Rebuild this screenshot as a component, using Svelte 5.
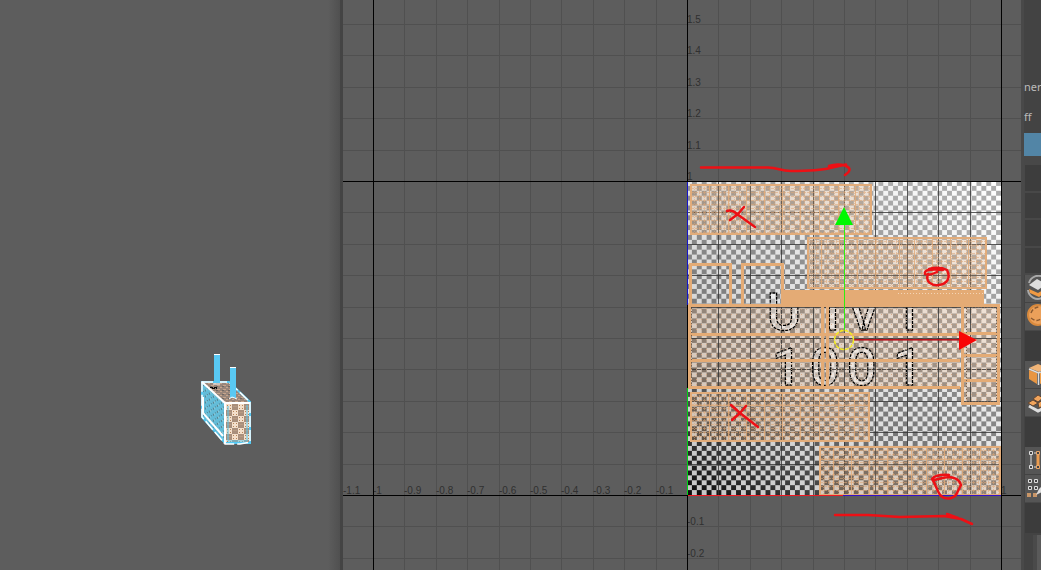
<script>
  const step = 31.4;
  const columns = Array.from({ length: 22 }, (_, i) => i - 10).map((n) => ({
    n,
    x: Math.round(687 + n * step) + 0.5
  }));
  const rows = Array.from({ length: 19 }, (_, i) => i - 3).map((n) => ({
    n,
    y: Math.round(495 - n * step) + 0.5
  }));
  const xLabels = [-11, -10, -9, -8, -7, -6, -5, -4, -3, -2, -1, 10].map((n) => ({
    text: String(n / 10),
    x: Math.round(687 + n * step) + (n === -11 ? 1 : 0)
  }));
  const yLabels = [15, 14, 13, 12, 11, 10, -1, -2].map((n) => ({
    text: String(n / 10),
    y: Math.round(495 - n * step)
  }));
  const inner = Array.from({ length: 9 }, (_, i) => Math.round((i + 1) * step));

  const shells = [
    { x: 691, y: 185, w: 180, h: 49, v: [18, 37, 55, 73, 91, 109, 128, 147, 164], hs: [] },
    { x: 808, y: 238, w: 178, h: 50, v: [13, 31, 49, 67, 91, 106, 124, 142, 160], hs: [] },
    { x: 691, y: 393, w: 178, h: 48, v: [18, 37, 55, 73, 91, 109, 128, 147, 163], hs: [12, 24] },
    { x: 820, y: 447, w: 180, h: 48, v: [13, 31, 49, 67, 91, 106, 124, 142, 160], hs: [12] }
  ];
</script>

<main>
  <section class="scene" aria-label="Perspective view">
    <svg>
      <defs>
        <pattern id="faceChecks" width="12" height="12" patternUnits="userSpaceOnUse" x="226" y="404">
          <rect width="12" height="12" fill="#f3dfcb" />
          <path d="M6 0h6v6h-6zM0 6h6v6H0z" fill="#a98f7c" />
          <path d="M1 1h1v1H1zM4 1h1v1H4zM1 4h1v1H1zM4 4h1v1H4zM7 7h1v1H7zM10 7h1v1h-1zM7 10h1v1H7zM10 10h1v1h-1z" fill="#b78458" />
          <path d="M7 2h4v1H7zM1 8h4v1H1z" fill="#b89b83" />
        </pattern>
        <pattern id="sideDots" width="4" height="6" patternUnits="userSpaceOnUse" patternTransform="skewY(38)">
          <rect width="4" height="6" fill="#63bdd9" />
          <path d="M1 1h1v2H1zM3 4h1v1H3z" fill="#567f8c" />
          <path d="M2 0h1v1H2z" fill="#a5cbd2" />
        </pattern>
        <pattern id="roofDots" width="6" height="4" patternUnits="userSpaceOnUse">
          <rect width="6" height="4" fill="#98857a" />
          <path d="M1 1h3v1H1zM4 3h2v1H4z" fill="#c7a58c" />
          <path d="M0 2h2v1H0z" fill="#6f6864" />
        </pattern>
      </defs>
      <path d="M202 382 225 403V444L202 417Z" fill="url(#sideDots)" />
      <path d="M202 382 229 381 250 402H225Z" fill="url(#roofDots)" />
      <path d="M225 403H250V443H225Z" fill="url(#faceChecks)" />
      <path d="M202 382H229L250 402V443H225L202 417Z" fill="none" stroke="#55c8f2" stroke-width="2" />
      <path d="M202 382 225 403V444M225 403H250M203 397V413L223 436" fill="none" stroke="#fff" stroke-width="2" />
      <path d="M202 382H229L250 402V442L240 444H225L202 417Z" fill="none" stroke="#fff" stroke-width="1.5" stroke-dasharray="11 3" />
      <path d="M228 406V441H247V405" fill="none" stroke="#57c5ed" />
      <path d="M210 387.500h8M212 388.500h5" stroke="#080808" stroke-dasharray="3 1" />
      <path d="M214 355h6v28h-6zM230 368h6v30h-6z" fill="#59c9f4" />
      <path d="M214 354.5h6M230 367.5h6M213 384h7M229 399l3-2 5 2" stroke="#fff" fill="none" />
    </svg>
  </section>

  <section class="editor" aria-label="UV editor">
    <svg>
      <defs>
        <linearGradient id="darkTone" gradientUnits="userSpaceOnUse" x1="687" y1="495" x2="875" y2="181">
          <stop offset="0" stop-color="#080808" />
          <stop offset=".2" stop-color="#454545" />
          <stop offset=".4" stop-color="#747474" />
          <stop offset=".65" stop-color="#8b8b8b" />
          <stop offset="1" stop-color="#acacac" />
        </linearGradient>
        <linearGradient id="lightTone" gradientUnits="userSpaceOnUse" x1="687" y1="495" x2="1001" y2="181">
          <stop offset="0" stop-color="#c6c6c6" />
          <stop offset=".5" stop-color="#e2e2e2" />
          <stop offset="1" stop-color="#fff" />
        </linearGradient>
        <pattern id="cells" width="9.8125" height="9.8125" patternUnits="userSpaceOnUse" x="687" y="181">
          <path d="M4.906 0h4.906v4.906H4.906zM0 4.906h4.906v4.906H0z" fill="#fff" />
        </pattern>
        <mask id="checks"><rect x="687" y="181" width="314" height="314" fill="url(#cells)" /></mask>
      </defs>

      <g transform="translate(-343 0)">
        <g stroke="#505050">
          {#each columns as c}<path d="M{c.x} 0V2000" />{/each}
          {#each rows as r}<path d="M343 {r.y}H3000" />{/each}
        </g>
        <g class="ticks">
          {#each xLabels as l}<text x={l.x} y="494">{l.text}</text>{/each}
          {#each yLabels as l}<text x="687" y={l.y - 1}>{l.text}</text>{/each}
        </g>

        <rect x="687" y="181" width="314" height="314" fill="url(#lightTone)" />
        <rect x="687" y="181" width="314" height="314" fill="url(#darkTone)" mask="url(#checks)" />

        <path d="M688 305H960V388H688ZM961 305H1000V404H961Z" fill="#e4ab7a" opacity=".24" />

        <g class="tile">
          <text x="767 816 847 893" y="330">U1V1</text>
          <text x="772 810 847 893" y="385">1001</text>
        </g>

        <g stroke="#333" stroke-opacity=".8">
          {#each inner as d}
            <path d="M{687.5 + d} 182V495M688 {495.5 - d}H1001" />
          {/each}
        </g>

        {#each shells as s}
          <rect x={s.x} y={s.y} width={s.w} height={s.h} fill="#e2ac7a" opacity=".24" />
          <g stroke="#dfa878" opacity=".6">
            {#each Array(Math.floor(s.h / 4)) as _, i}
              <path d="M{s.x} {s.y + 3.5 + i * 4}h{s.w}" stroke-dasharray="3 1" />
            {/each}
            {#each Array(Math.floor(s.w / 5)) as _, i}
              <path d="M{s.x + 3.5 + i * 5} {s.y}v{s.h}" stroke-dasharray="1 1" />
            {/each}
          </g>
          <rect x={s.x} y={s.y} width={s.w} height={s.h} fill="none" stroke="#e2ac7a" stroke-width="2" />
          {#each s.v as d}<path d="M{s.x + d + 0.5} {s.y}v{s.h}" stroke="#e2ac7a" opacity=".8" />{/each}
          {#each s.hs as d}<path d="M{s.x} {s.y + d + 0.5}h{s.w}" stroke="#e2ac7a" opacity=".8" />{/each}
        {/each}

        <g stroke="#d9a57b" stroke-dasharray="1 4" opacity=".8">
          {#each Array(16) as _, i}<path d="M691 {309.5 + i * 5}H960" />{/each}
          {#each Array(19) as _, i}<path d="M966 {309.5 + i * 5}H997" />{/each}
        </g>
        <g fill="none" stroke="#e4ab75" stroke-width="3">
          <path d="M690.500 306V264.500H730.500V305M742.500 305V264.500H782.500V305" />
          <path d="M688 305.500H1000M688 334.500H960M688 360.500H960M688 387.500H960M689.500 305V388M822.500 305V388M827.500 305V388" />
          <path d="M962.500 305V404M998.500 305V404M961 403.500H1000M961 333.500H1000M961 355.500H1000M961 380.500H1000" />
        </g>
        <path d="M781 290H984V304H781Z" fill="#e4ab75" />
        <path d="M898 293.500H984" stroke="#f4d4b5" stroke-dasharray="1 2" />
        <path d="M691.500 308V386M966 307.500H996M966.500 308V401M996.500 308V401M966 401.500H996" stroke="#75604e" stroke-dasharray="1 2" fill="none" />

        <g stroke="#000">
          <path d="M373.500 0V2000M687.500 0V2000M1001.500 0V2000M343 181.500H3000M343 495.500H3000" />
        </g>
        <path d="M687.500 182V305" stroke="#1414c8" />
        <path d="M687.500 388V495" stroke="#00d616" />
        <path d="M688 495.500H843" stroke="#f01823" />
        <path d="M843 495.500H1001" stroke="#3211c9" />

        <path d="M844.500 225V330" stroke="#2ff00c" />
        <path d="M844 207 853 225H835Z" fill="#00f800" />
        <path d="M854 339.500H960" stroke="#b4151e" />
        <path d="M854 340.500H960" stroke="#b4151e" opacity=".6" />
        <path d="M959 331 977 340 959 350Z" fill="#f90505" />
        <circle cx="844" cy="340" r="9.500" fill="none" stroke="#f4ec20" stroke-width="1.5" stroke-dasharray="4 1" />

        <g class="marker">
          <path d="M701 167.500H768C779 168 780 171 791 171C805 171 819 171 830 168L846 164.500M829 166C838 163 846 165 849 168Q851 171 845 175" />
          <path d="M727 211Q732 209 737 214L755 227M744 207 738 214 730 220" />
          <path d="M731 405 740 413 758 427M746 406 740 413 732 420" />
          <path d="M943 270Q923 268 925 274Q929 276 937 272M928 274C925 282 932 286 939 285C947 284 951 278 947 270Q939 266 929 269" />
          <path d="M949 475Q936 474 932 479C935 482 937 492 941 496C947 501 955 498 957 493L961 485Q959 477 947 477L934 480" />
          <path d="M835 515 868 515 900 517 944 516 961 519 972 524M947 514 958 518" />
        </g>
      </g>
    </svg>
  </section>

  <aside aria-label="UV toolkit">
    <p class="first">ner</p>
    <p class="second">ff</p>
    <div class="selected"></div>
    <div class="group"><i></i><i></i><i></i><i></i></div>
    <div class="tools">
      <button aria-label="Unfold"><svg viewBox="0 0 24 27"><path d="M20 3A10 10 0 0 0 4 8M3 15A10 10 0 0 0 17 23" fill="none" stroke="#aaa" stroke-width="2" /><path d="M4 10 12 4 21 9 13 15Z" fill="#ddd" /><path d="M4 14 13 18 22 13V16L14 22 5 18Z" fill="#f19a43" /></svg></button>
      <button aria-label="Smooth"><svg viewBox="0 0 24 27"><circle cx="13" cy="12" r="10" fill="#eba05a" stroke="#d98a3d" stroke-width="2" /><path d="M6 10Q8 4 15 4M6 15Q12 20 17 15" fill="none" stroke="#8b5a30" stroke-width="1.500" stroke-dasharray="4 2" /></svg></button>
    </div>
    <div class="space"></div>
    <div class="tools">
      <button aria-label="Cube"><svg viewBox="0 0 24 27"><path d="M4 7 13 3 23 7 14 11Z" fill="#f0b477" /><path d="M4 9 12 12V23L4 18Z" fill="#e89643" /><path d="M15 12 23 8V18L15 23Z" fill="#f0a04b" /><path d="M13.500 12V24M4 8 13.500 12 23 8" stroke="#ddd" stroke-width="1.5" fill="none" /></svg></button>
      <button aria-label="Layout"><svg viewBox="0 0 24 27"><path d="M4 17 13 22 23 17" fill="none" stroke="#ddd" stroke-width="3" /><path d="M3 14 8 11 13 14 8 17ZM8 10 13 6 18 9 13 13ZM13 14 18 11 23 14 14 19Z" fill="#f0a45c" stroke="#624633" /></svg></button>
    </div>
    <div class="space"></div>
    <div class="tools">
      <button aria-label="Align"><svg viewBox="0 0 24 27"><path d="M6 8V19M9 6H11M9 20H11" stroke="#ddd" /><path d="M13 8V19" stroke="#eb9c50" stroke-width="3" /><path d="M4.500 4.500h3v3h-3zM4.500 18.500h3v3h-3z" fill="#444" stroke="#ddd" /><path d="M11.500 4.500h3v3h-3zM11.500 18.500h3v3h-3z" fill="#444" stroke="#eba668" /></svg></button>
      <button aria-label="Edit points"><svg viewBox="0 0 24 27"><path d="M3.500 4.500h3v3h-3zM9.500 4.500h3v3h-3zM3.500 11.500h3v3h-3zM9.500 11.500h3v3h-3z" fill="#444" stroke="#ddd" /><path d="M2 18h4v4H2zM8 18h4v4H8z" fill="#c89567" /><path d="M11 20 14 14 22 6 25 9 17 17Z" fill="#ddd" /></svg></button>
    </div>
    <div class="space"></div>
    <div class="footer"></div>
  </aside>
</main>

<style>
  main {
    display: flex;
    height: 100vh;
    overflow: hidden;
    background: #5d5d5d;
    font-family: "Liberation Sans", Arial, sans-serif;
  }
  section svg {
    display: block;
    width: 100%;
    height: 100%;
  }
  .scene {
    flex: 340 1 0;
    min-width: 0;
    background: linear-gradient(to left, #505050, #5d5d5d 12px);
    border-right: 3px solid #444;
  }
  .editor {
    flex: 678 1 0;
    min-width: 0;
    background: #5d5d5d;
    border-right: 3px solid #494949;
  }
  .ticks {
    font-size: 10px;
    fill: #303030;
  }
  .tile {
    font: 500 52px Roboto, sans-serif;
    fill: #fff;
    fill-opacity: 0.45;
    stroke: #000;
    stroke-width: 1.3;
    stroke-dasharray: 3 1;
  }
  .marker {
    fill: none;
    stroke: #ed1015;
    stroke-width: 2.5;
    stroke-linecap: round;
    stroke-linejoin: round;
  }
  aside {
    display: flex;
    flex-direction: column;
    flex: none;
    width: 17px;
    overflow: hidden;
    background: #434343;
    color: #bbb;
  }
  p {
    flex: none;
    margin: 0;
    font-family: "Noto Sans", sans-serif;
    font-size: 11px;
    line-height: 30px;
  }
  .first {
    padding-top: 72px;
  }
  .selected {
    flex: none;
    height: 23px;
    margin-top: 1px;
    background: #5285a6;
  }
  .group {
    display: flex;
    flex-direction: column;
    flex: none;
    gap: 2px;
    height: 119px;
    padding: 9px 0 2px 1px;
    box-sizing: border-box;
    background: #484848;
  }
  .group i {
    flex: 1;
    background: #3d3d3d;
  }
  .tools {
    display: flex;
    flex-direction: column;
    flex: none;
    gap: 1px;
    padding-left: 1px;
  }
  button {
    display: block;
    flex: none;
    height: 27px;
    padding: 0;
    border: 0;
    background: #555;
    overflow: hidden;
  }
  button svg {
    display: block;
    width: 24px;
    height: 27px;
  }
  .space {
    flex: none;
    height: 31px;
    margin-left: 1px;
    background: #3c3c3c;
    border-top: 1px solid #484848;
    box-sizing: border-box;
  }
  .footer {
    flex: 1;
    margin: 2px 0 0 9px;
    border-left: 4px solid #4a4a4a;
    background: #5a5a5a;
  }
</style>
